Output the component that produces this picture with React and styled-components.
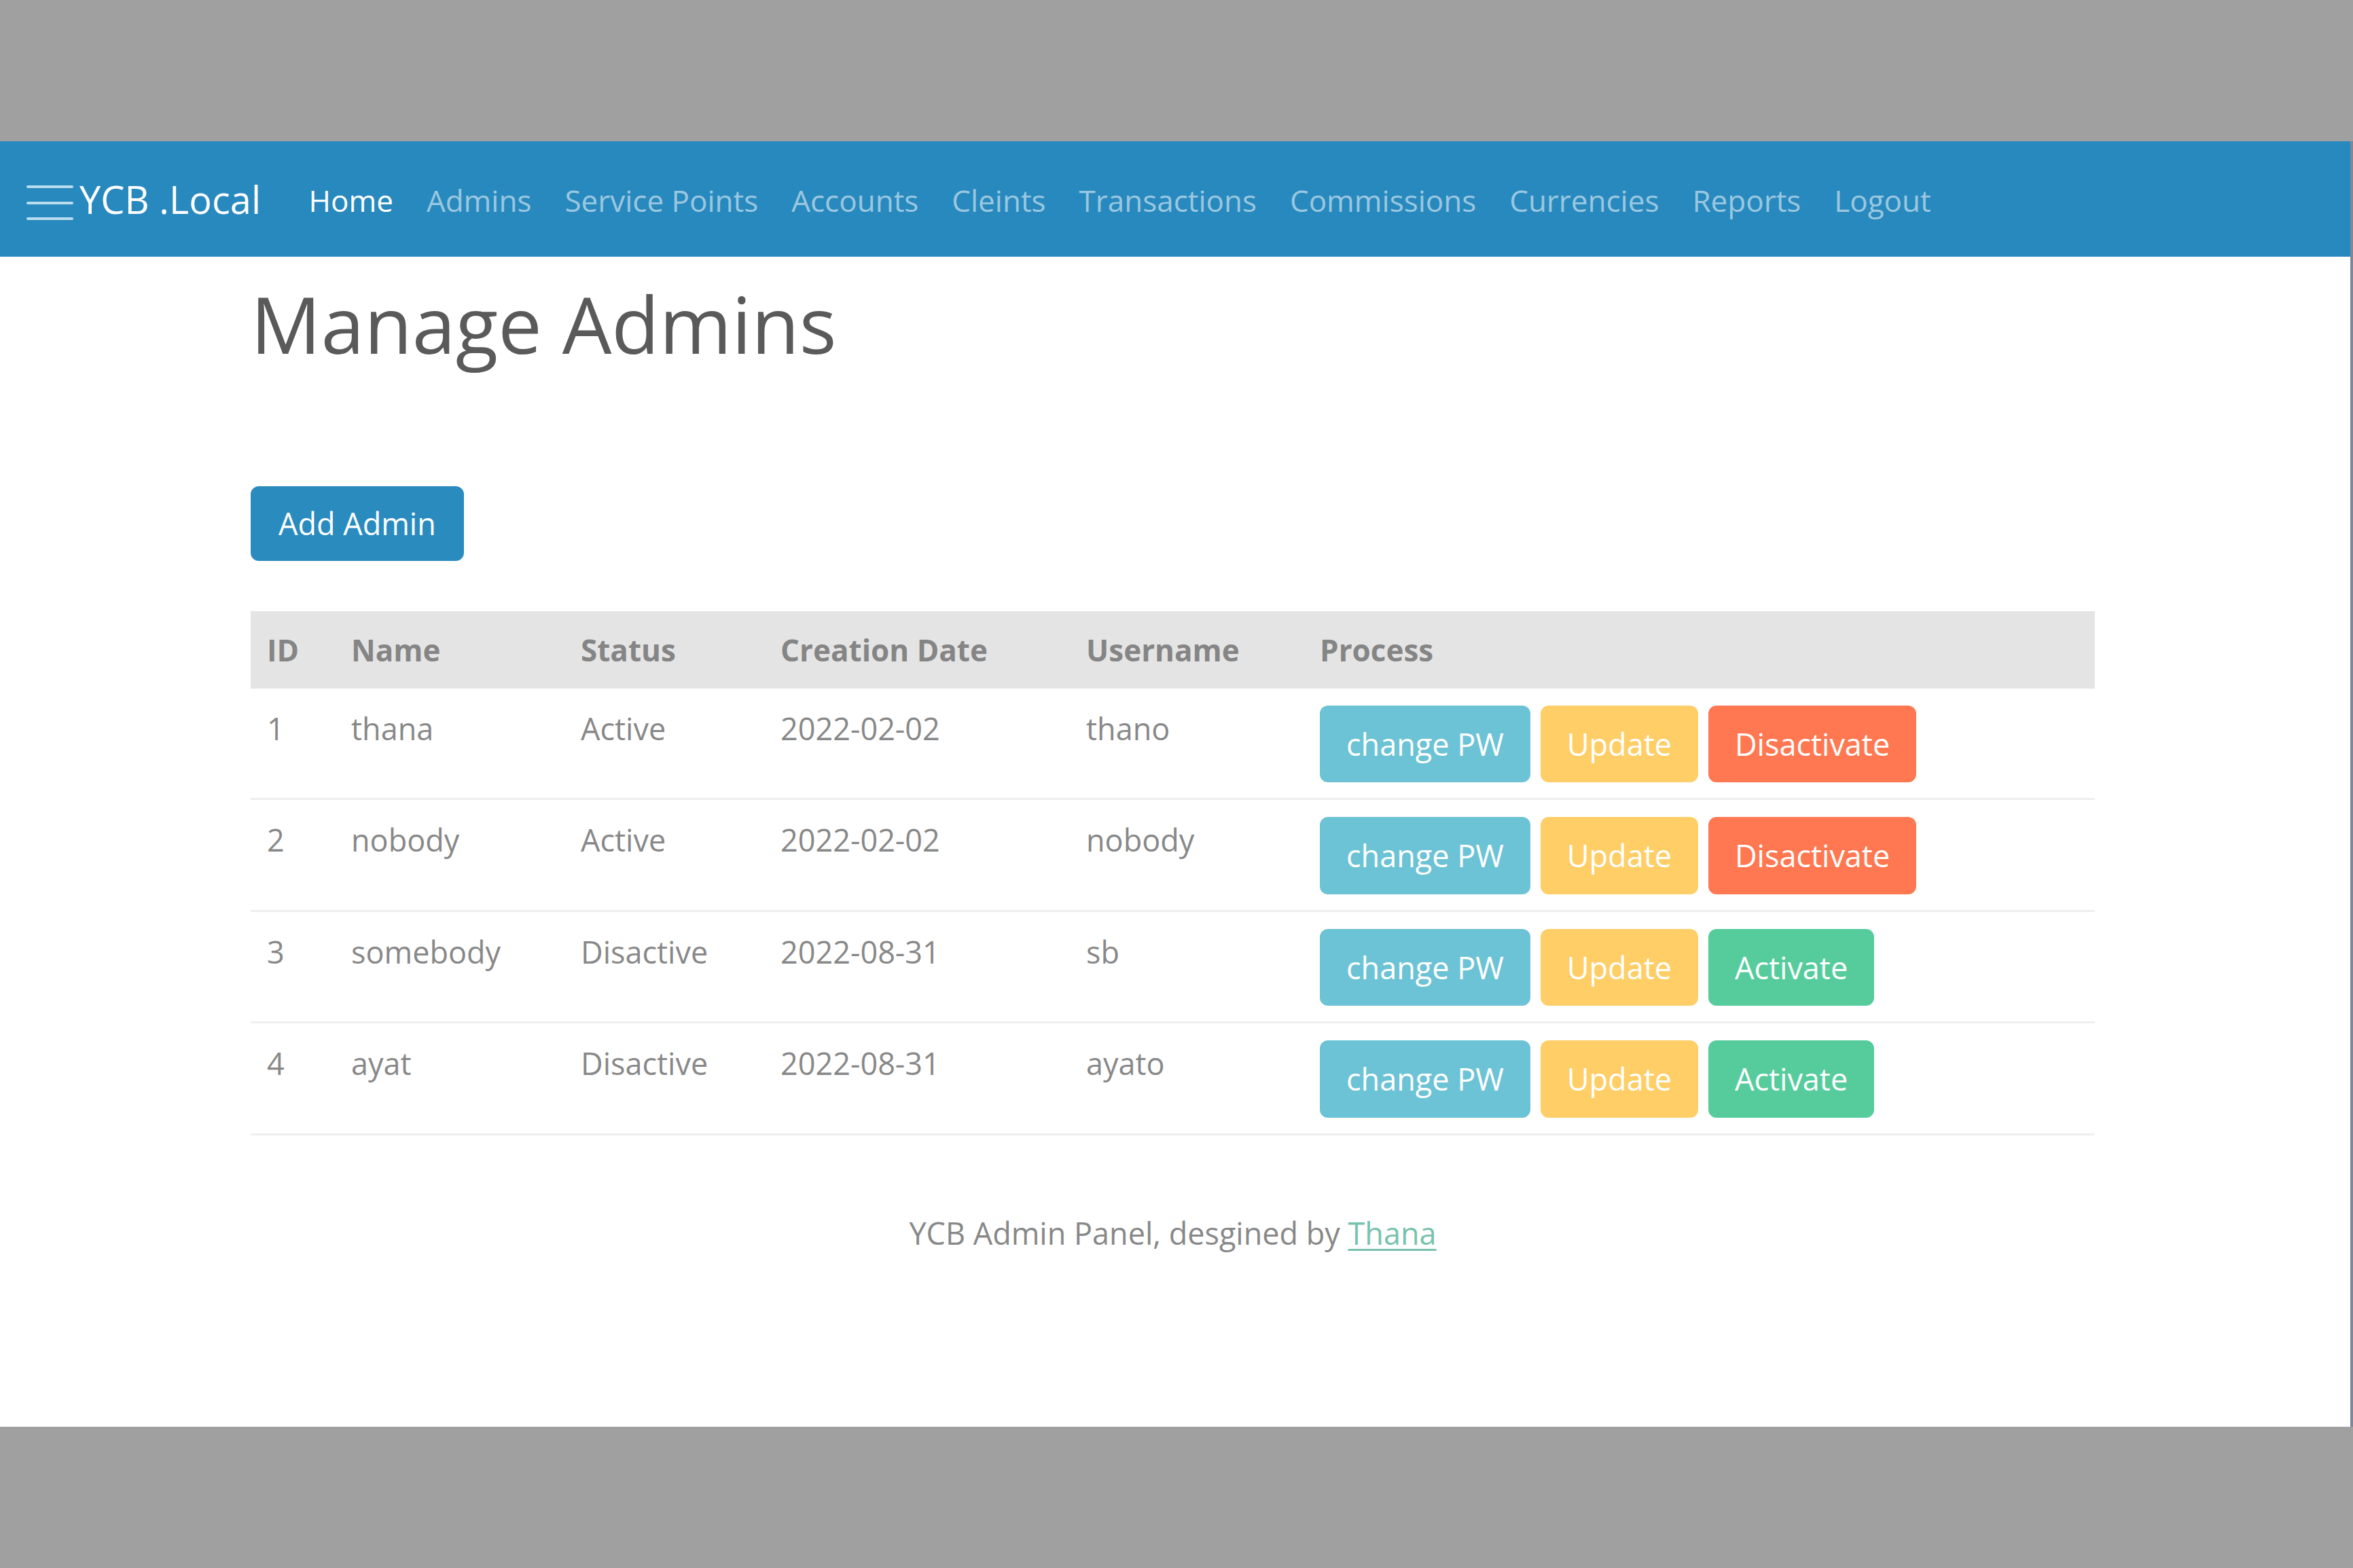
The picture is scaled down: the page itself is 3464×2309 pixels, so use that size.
import React from 'react';
import styled, { createGlobalStyle } from 'styled-components';

const GlobalStyle = createGlobalStyle`
  html, body {
    margin: 0;
    padding: 0;
    background: #a0a0a0;
  }
  * {
    box-sizing: border-box;
  }
`;

const Page = styled.div`
  padding: 208px 0;
  font-family: 'Open Sans', 'Noto Sans', sans-serif;
`;

const Frame = styled.div`
  width: 3464px;
  height: 1893px;
  background: #ffffff;
  border-right: 4px solid #7f8898;
  display: flex;
  flex-direction: column;
`;

const NavBar = styled.nav`
  height: 170px;
  background-color: #2889be;
  display: flex;
  align-items: center;
  padding-left: 39px;
  flex-shrink: 0;
`;

const Burger = styled.svg`
  width: 69px;
  height: 56px;
  margin-top: 12px;
  margin-right: 9px;
`;

const Brand = styled.a`
  font-size: 56px;
  color: #ffffff;
  text-decoration: none;
  margin-right: 46px;
  line-height: 1.5;
`;

const NavList = styled.ul`
  display: flex;
  list-style: none;
  margin: 0;
  padding: 0;
`;

const NavLink = styled.a`
  display: block;
  padding: 0 24.5px;
  font-size: 44px;
  line-height: 1.5;
  margin-top: 3px;
  text-decoration: none;
  color: ${props => props.active ? '#ffffff' : 'rgba(255, 255, 255, 0.55)'};
`;

const Container = styled.main`
  width: 2715px;
  margin-left: 369px;
`;

const Title = styled.h1`
  font-size: 115px;
  font-weight: 400;
  line-height: 1.2;
  color: #5a5a5a;
  margin: 30px 0 0;
`;

const Button = styled.button`
  font-family: inherit;
  font-size: 45px;
  line-height: 1.5;
  color: #ffffff;
  background-color: ${props => props.bg};
  border: 3px solid ${props => props.bg};
  border-radius: 12px;
  padding: ${props => props.big ? '18px 38px' : '20px 36px'};
  cursor: pointer;
  white-space: nowrap;
`;

const AddRow = styled.div`
  margin-top: 170px;
`;

const Table = styled.table`
  width: 100%;
  margin-top: 74px;
  border-collapse: collapse;
  color: #888888;
  font-size: 45px;
`;

const HeadCell = styled.th`
  width: ${props => props.w ? `${props.w}px` : 'auto'};
  text-align: left;
  font-weight: 700;
  font-size: 44px;
  line-height: 1.5;
  padding: ${props => props.last ? '24px 24px 24px 22px' : '24px'};
  background-color: #e4e4e4;
  color: #858585;
`;

const Row = styled.tr`
  border-bottom: 3px solid #eeeeee;
`;

const Cell = styled.td`
  vertical-align: top;
  padding: 25px 24px 23px;
  line-height: 1.5;
`;

const ActionCell = styled(Cell)`
  padding-left: 22px;
`;

const Actions = styled.div`
  display: flex;
  gap: 15px;
`;

const Footer = styled.footer`
  text-align: center;
  margin-top: 110px;
  font-size: 45px;
  line-height: 1.5;
  color: #888888;

  a {
    color: #78c2ad;
    text-decoration: underline;
    text-decoration-thickness: 3px;
    text-underline-offset: 6px;
  }
`;

const colors = {
  primary: '#2a8bbf',
  info: '#6cc3d5',
  warning: '#ffce67',
  danger: '#ff7851',
  success: '#56cc9d',
};

const navItems = ['Home', 'Admins', 'Service Points', 'Accounts', 'Cleints', 'Transactions', 'Commissions', 'Currencies', 'Reports', 'Logout'];

const admins = [
  { id: 1, name: 'thana', status: 'Active', date: '2022-02-02', username: 'thano' },
  { id: 2, name: 'nobody', status: 'Active', date: '2022-02-02', username: 'nobody' },
  { id: 3, name: 'somebody', status: 'Disactive', date: '2022-08-31', username: 'sb' },
  { id: 4, name: 'ayat', status: 'Disactive', date: '2022-08-31', username: 'ayato' },
];

const App = () => {
  return (
    <Page>
      <GlobalStyle />
      <Frame>
        <NavBar>
          <Burger viewBox="0 0 69 56">
            <line x1="2" y1="4" x2="67" y2="4" stroke="#b9dcee" strokeWidth="4" strokeLinecap="round" />
            <line x1="2" y1="28" x2="67" y2="28" stroke="#b9dcee" strokeWidth="4" strokeLinecap="round" />
            <line x1="2" y1="51" x2="67" y2="51" stroke="#b9dcee" strokeWidth="4" strokeLinecap="round" />
          </Burger>
          <Brand href="#">YCB .Local</Brand>
          <NavList>
            {navItems.map((item, i) => (
              <li key={item}>
                <NavLink href="#" active={i === 0}>{item}</NavLink>
              </li>
            ))}
          </NavList>
        </NavBar>
        <Container>
          <Title>Manage Admins</Title>
          <AddRow>
            <Button big bg={colors.primary}>Add Admin</Button>
          </AddRow>
          <Table>
            <thead>
              <tr>
                <HeadCell w={124}>ID</HeadCell>
                <HeadCell w={338}>Name</HeadCell>
                <HeadCell w={294}>Status</HeadCell>
                <HeadCell w={450}>Creation Date</HeadCell>
                <HeadCell w={346}>Username</HeadCell>
                <HeadCell last>Process</HeadCell>
              </tr>
            </thead>
            <tbody>
              {admins.map(a => (
                <Row key={a.id}>
                  <Cell>{a.id}</Cell>
                  <Cell>{a.name}</Cell>
                  <Cell>{a.status}</Cell>
                  <Cell>{a.date}</Cell>
                  <Cell>{a.username}</Cell>
                  <ActionCell>
                    <Actions>
                      <Button bg={colors.info}>change PW</Button>
                      <Button bg={colors.warning}>Update</Button>
                      {a.status === 'Active'
                        ? <Button bg={colors.danger}>Disactivate</Button>
                        : <Button bg={colors.success}>Activate</Button>}
                    </Actions>
                  </ActionCell>
                </Row>
              ))}
            </tbody>
          </Table>
          <Footer>
            YCB Admin Panel, desgined by <a href="#">Thana</a>
          </Footer>
        </Container>
      </Frame>
    </Page>
  );
};

export default App;
